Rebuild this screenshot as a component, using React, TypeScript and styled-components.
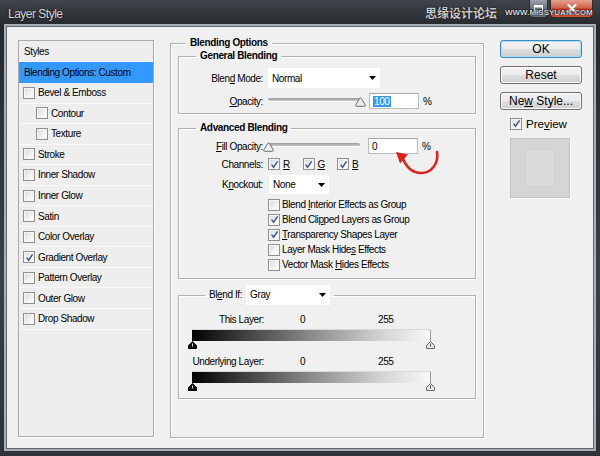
import React from 'react';
import styled, { createGlobalStyle } from 'styled-components';

const Global = createGlobalStyle`
  html, body { margin: 0; padding: 0; background: #2b2f33; }
  body { font-family: 'Liberation Sans', Arial, sans-serif; }
  * { box-sizing: border-box; }
`;

const Window = styled.div`
  position: relative;
  width: 600px;
  height: 456px;
  display: flex;
  flex-direction: column;
  padding: 0 7px 8px;
  overflow: hidden;
  background: linear-gradient(180deg, #3f454b 0%, #262a2e 26px, #3a4047 60%, #2e3338 100%);
`;

const TitleBar = styled.div`
  position: relative;
  height: 27px;
  flex: none;
  display: flex;
  align-items: flex-start;
`;

const TitleText = styled.div`
  padding: 7px 0 0 1px;
  font-size: 12px;
  letter-spacing: -0.5px;
  color: #d6d6d6;
  text-shadow: 0 0 2px #000;
`;

const Caption = styled.div`
  margin-left: auto;
  display: flex;
  gap: 2px;
`;

const CapButton = styled.div<{ $close?: boolean }>`
  width: ${p => (p.$close ? 43 : 19)}px;
  height: 18px;
  border: 1px solid #2a2a2a;
  border-top: none;
  border-radius: 0 0 4px 4px;
  display: flex;
  align-items: center;
  justify-content: center;
  background: ${p =>
    p.$close
      ? 'linear-gradient(180deg, #e7a08f 0%, #d0614a 45%, #b8301a 55%, #d2573b 100%)'
      : 'linear-gradient(180deg, #9aa3ab 0%, #6b747c 50%, #4e565d 55%, #6a737a 100%)'};
`;

const Watermark = styled.div`
  position: absolute;
  left: 418px;
  top: 4px;
  display: flex;
  align-items: center;
  gap: 8px;
  white-space: nowrap;
  pointer-events: none;
`;

const WmCn = styled.span`
  flex: none;
  font-family: 'Noto Sans CJK SC', sans-serif;
  font-size: 12px;
  font-weight: bold;
  color: #c9c9c9;
  text-shadow: 0 0 1px #000, 0 0 1px #000;
`;

const WmEn = styled.span`
  flex: none;
  font-family: 'Liberation Sans', Arial, sans-serif;
  font-size: 8px;
  font-weight: bold;
  color: #d4d4d4;
  text-shadow: 0 0 1px #000, 0 0 1px #000;
`;

const Client = styled.div`
  flex: 1;
  display: flex;
  align-items: flex-start;
  gap: 16px;
  padding: 13px 11px 0;
  background: #f0f0f0;
  box-shadow: 0 0 0 1px #636970, 0 0 0 3px #a6aeb6;
  font-size: 10px;
  letter-spacing: -0.4px;
  color: #000;
`;

/* ---------- left list ---------- */

const StylesList = styled.div`
  width: 136px;
  height: 397px;
  flex: none;
  border: 1px solid #a9a9a9;
  box-shadow: 1px 1px 0 #fff;
  background: #eeeeee;
  display: flex;
  flex-direction: column;
`;

const StyleRow = styled.div<{ $selected?: boolean; $indent?: boolean; $header?: boolean }>`
  height: ${p => (p.$header || p.$selected ? 21 : 20.55)}px;
  flex: none;
  display: flex;
  align-items: center;
  gap: 3px;
  padding-left: ${p => (p.$header || p.$selected ? 5 : p.$indent ? 17 : 4)}px;
  background: ${p => (p.$selected ? '#3399ff' : 'transparent')};
  border-bottom: 1px solid ${p => (p.$selected ? '#3399ff' : '#f9f9f9')};
  white-space: nowrap;
`;

/* ---------- checkbox ---------- */

const Box = styled.span`
  flex: none;
  width: 12px;
  height: 12px;
  border: 1px solid #8f8f8f;
  background: linear-gradient(135deg, #d6d8db 0%, #f3f3f3 60%, #ffffff 100%);
  box-shadow: inset 0 0 0 1px #f6f6f6;
  display: flex;
  align-items: center;
  justify-content: center;
`;

const Check = ({ checked }: { checked?: boolean }) => (
  <Box>
    {checked && (
      <svg width="9" height="9" viewBox="0 0 9 9">
        <path d="M1.6 4.6 L3.6 7.2 L7.6 1.4" fill="none" stroke="#3b5596" strokeWidth="1.5" />
      </svg>
    )}
  </Box>
);

/* ---------- group boxes ---------- */

const Group = styled.fieldset<{ $w: number; $h?: number; $mt?: number }>`
  position: relative;
  margin: ${p => p.$mt ?? 0}px 0 0;
  padding: 0;
  width: ${p => p.$w}px;
  ${p => (p.$h ? `height: ${p.$h}px;` : '')}
  min-width: 0;
  border: 1px solid #b0b0b0;
  box-shadow: 1px 1px 0 #fff, inset 1px 1px 0 #fff;
`;

const Legend = styled.legend<{ $offset: number; $plain?: boolean }>`
  margin-left: ${p => p.$offset}px;
  padding: 0 4px;
  font-weight: ${p => (p.$plain ? 'normal' : 'bold')};
  letter-spacing: ${p => (p.$plain ? '-0.4px' : '-0.35px')};
  line-height: 12px;
  display: flex;
  align-items: center;
  gap: 4px;
`;

const GroupBody = styled.div<{ $pad: string }>`
  padding: ${p => p.$pad};
  display: flex;
  flex-direction: column;
`;

const Middle = styled.div`
  margin-top: -3px;
  flex: none;
`;

const FormRow = styled.div<{ $h: number; $mt?: number }>`
  height: ${p => p.$h}px;
  margin-top: ${p => p.$mt ?? 0}px;
  display: flex;
  align-items: center;
  flex: none;
`;

const Label = styled.span<{ $w?: number; $gap?: number }>`
  width: ${p => p.$w ?? 84}px;
  margin-right: ${p => p.$gap ?? 5}px;
  text-align: right;
  flex: none;
  white-space: nowrap;
`;

const U = styled.u`
  text-decoration: underline;
  text-underline-offset: 1px;
`;

const SelectBox = styled.div<{ $w: number; $h: number }>`
  width: ${p => p.$w}px;
  height: ${p => p.$h}px;
  flex: none;
  background: #fff;
  display: flex;
  align-items: center;
  justify-content: space-between;
  padding: 0 4px 0 4px;
  font-weight: normal;
`;

const Arrow = () => (
  <svg width="7" height="4" viewBox="0 0 7 4">
    <path d="M0 0 H7 L3.5 4 Z" fill="#000" />
  </svg>
);

const Select = ({ w, h, value }: { w: number; h: number; value: string }) => (
  <SelectBox $w={w} $h={h}>
    <span>{value}</span>
    <Arrow />
  </SelectBox>
);

const SliderWrap = styled.div`
  position: relative;
  width: 102px;
  height: 16px;
  flex: none;
  padding: 5px 6px 0 3px;
`;

const Track = styled.div`
  height: 3px;
  border-radius: 2px;
  background: linear-gradient(180deg, #9a9a9a, #c8c8c8);
  box-shadow: 0 1px 0 #fff;
`;

const ThumbHolder = styled.div`
  position: absolute;
  top: 4px;
`;

const Slider = ({ pos }: { pos: number }) => (
  <SliderWrap>
    <Track />
    <ThumbHolder style={{ left: `${3 + pos * 91 - 4}px` }}>
      <svg width="11" height="10" viewBox="0 0 11 10">
        <path d="M5.5 1 Q6 1 6.6 1.8 L10.3 8 Q10.5 9.3 9.5 9.3 L1.5 9.3 Q0.5 9.3 0.7 8 L4.4 1.8 Q5 1 5.5 1 Z" fill="#ececec" stroke="#6f6f6f" strokeWidth="1" />
      </svg>
    </ThumbHolder>
  </SliderWrap>
);

const NumInput = styled.div<{ $h: number }>`
  width: 50px;
  height: ${p => p.$h}px;
  margin-left: 2px;
  flex: none;
  background: #fff;
  border: 1px solid #b9bdc4;
  border-top-color: #a4a8ae;
  display: flex;
  align-items: center;
  padding-left: 3px;
`;

const Selected = styled.span`
  background: #3399ff;
  color: #fff;
  padding: 0 1px;
`;

const Pct = styled.span`
  margin-left: 4px;
`;

const ChannelItem = styled.div`
  width: 34.5px;
  flex: none;
  display: flex;
  align-items: center;
  gap: 3px;
`;

const CheckLine = styled.div`
  height: 15px;
  display: flex;
  align-items: center;
  gap: 2px;
  padding-left: 89px;
  white-space: nowrap;
`;

const ValueCell = styled.span<{ $w: number; $ml?: number }>`
  width: ${p => p.$w}px;
  margin-left: ${p => p.$ml ?? 0}px;
  flex: none;
`;

const GradBar = styled.div`
  width: 239px;
  height: 11px;
  margin: 5px 0 0 2px;
  flex: none;
  background: linear-gradient(90deg, #000 0%, #3a3a3a 20%, #8a8a8a 50%, #d4d4d4 80%, #f8f8f8 100%);
  border-right: 1px solid #9a9a9a;
  box-shadow: 0 -1px 0 #d8d8d8;
`;

const ThumbRow = styled.div`
  height: 8px;
  width: 247px;
  margin-left: -2px;
  display: flex;
  justify-content: space-between;
  flex: none;
`;

const BlendThumb = ({ dark }: { dark?: boolean }) => (
  <svg width="9" height="8" viewBox="0 0 9 8">
    <path
      d="M4.5 0.5 L8.5 4.5 L8.5 7.5 L0.5 7.5 L0.5 4.5 Z"
      fill={dark ? '#111' : '#e4e4e4'}
      stroke={dark ? '#000' : '#6a6a6a'}
      strokeWidth="1"
    />
    <line x1="4.5" y1="2.5" x2="4.5" y2="5.5" stroke={dark ? '#d8d8d8' : '#555'} strokeWidth="1" />
  </svg>
);

const RedArrow = styled.svg`
  position: absolute;
  left: 215px;
  top: 8px;
  overflow: visible;
`;

/* ---------- right column ---------- */

const RightCol = styled.div`
  width: 82px;
  flex: none;
  display: flex;
  flex-direction: column;
  letter-spacing: 0;
`;

const Button = styled.div<{ $default?: boolean; $mt?: number }>`
  height: 18px;
  margin-top: ${p => p.$mt ?? 0}px;
  border: 1px solid ${p => (p.$default ? '#3c8bc4' : '#707070')};
  border-radius: 3px;
  background: linear-gradient(180deg, #f3f3f3 0%, #ebebeb 48%, #dddddd 52%, #cfcfcf 100%);
  box-shadow: ${p => (p.$default ? 'inset 0 0 0 1px #a9dcf6' : 'inset 0 0 0 1px #fcfcfc')};
  display: flex;
  align-items: center;
  justify-content: center;
  font-size: 12px;
  color: #000;
`;

const PreviewRow = styled.div`
  margin-top: 7px;
  padding-left: 10px;
  height: 13px;
  display: flex;
  align-items: center;
  gap: 4px;
  font-size: 11.5px;
`;

const Swatch = styled.div`
  margin: 8px 0 0 10px;
  width: 60px;
  height: 60px;
  background: #d5d5d5;
  border: 1px solid #c3c3c3;
  box-shadow: 1px 1px 0 #fafafa;
  display: flex;
  align-items: center;
  justify-content: center;
`;

const SwatchInner = styled.div`
  width: 26px;
  height: 34px;
  background: #d9d9d9;
  border: 1px solid #dcdcdc;
`;

const styleItems: { label: string; checked?: boolean; indent?: boolean }[] = [
  { label: 'Bevel & Emboss' },
  { label: 'Contour', indent: true },
  { label: 'Texture', indent: true },
  { label: 'Stroke' },
  { label: 'Inner Shadow' },
  { label: 'Inner Glow' },
  { label: 'Satin' },
  { label: 'Color Overlay' },
  { label: 'Gradient Overlay', checked: true },
  { label: 'Pattern Overlay' },
  { label: 'Outer Glow' },
  { label: 'Drop Shadow' },
];

export default function App() {
  return (
    <>
      <Global />
      <Window>
        <TitleBar>
          <TitleText>Layer Style</TitleText>
          <Caption>
            <CapButton>
              <svg width="9" height="8" viewBox="0 0 9 8">
                <rect x="0.5" y="0.5" width="8" height="7" fill="none" stroke="#fff" />
                <rect x="0.5" y="0.5" width="8" height="2" fill="#fff" />
              </svg>
            </CapButton>
            <CapButton $close>
              <svg width="10" height="9" viewBox="0 0 10 9">
                <path d="M1.5 1 L8.5 8 M8.5 1 L1.5 8" stroke="#fff" strokeWidth="2.2" strokeLinecap="round" />
              </svg>
            </CapButton>
          </Caption>
          <Watermark>
            <WmCn>思缘设计论坛</WmCn>
            <WmEn>WWW.MISSYUAN.COM</WmEn>
          </Watermark>
        </TitleBar>

        <Client>
          <StylesList>
            <StyleRow $header>Styles</StyleRow>
            <StyleRow $selected>Blending Options: Custom</StyleRow>
            {styleItems.map(it => (
              <StyleRow key={it.label} $indent={it.indent}>
                <Check checked={it.checked} />
                <span>{it.label}</span>
              </StyleRow>
            ))}
          </StylesList>

          <Middle>
            <Group $w={314} $h={401}>
              <Legend $offset={15}>Blending Options</Legend>
              <GroupBody $pad="1px 7px 0">
                <Group $w={298}>
                  <Legend $offset={17}>General Blending</Legend>
                  <GroupBody $pad="6px 0 4px">
                    <FormRow $h={20}>
                      <Label>
                        Blen<U>d</U> Mode:
                      </Label>
                      <Select w={112} h={20} value="Normal" />
                    </FormRow>
                    <FormRow $h={16} $mt={5}>
                      <Label $gap={2}>
                        <U>O</U>pacity:
                      </Label>
                      <Slider pos={1} />
                      <NumInput $h={16}>
                        <Selected>100</Selected>
                      </NumInput>
                      <Pct>%</Pct>
                    </FormRow>
                  </GroupBody>
                </Group>

                <Group $w={298} $mt={8}>
                  <Legend $offset={17}>Advanced Blending</Legend>
                  <GroupBody $pad="4px 0 6px">
                    <FormRow $h={16}>
                      <Label $gap={1}>
                        <U>F</U>ill Opacity:
                      </Label>
                      <Slider pos={0} />
                      <NumInput $h={16}>0</NumInput>
                      <Pct>%</Pct>
                    </FormRow>
                    <FormRow $h={14} $mt={3}>
                      <Label>Channels:</Label>
                      <ChannelItem>
                        <Check checked />
                        <U>R</U>
                      </ChannelItem>
                      <ChannelItem>
                        <Check checked />
                        <U>G</U>
                      </ChannelItem>
                      <ChannelItem>
                        <Check checked />
                        <U>B</U>
                      </ChannelItem>
                    </FormRow>
                    <FormRow $h={19} $mt={4}>
                      <Label $gap={6}>
                        K<U>n</U>ockout:
                      </Label>
                      <Select w={60} h={19} value="None" />
                    </FormRow>
                    <FormRow $h={3} />
                    <CheckLine>
                      <Check />
                      <span>
                        Blend <U>I</U>nterior Effects as Group
                      </span>
                    </CheckLine>
                    <CheckLine>
                      <Check checked />
                      <span>
                        Blend Cli<U>p</U>ped Layers as Group
                      </span>
                    </CheckLine>
                    <CheckLine>
                      <Check checked />
                      <span>
                        <U>T</U>ransparency Shapes Layer
                      </span>
                    </CheckLine>
                    <CheckLine>
                      <Check />
                      <span>
                        Layer Mask Hide<U>s</U> Effects
                      </span>
                    </CheckLine>
                    <CheckLine>
                      <Check />
                      <span>
                        Vector Mask <U>H</U>ides Effects
                      </span>
                    </CheckLine>
                  </GroupBody>
                  <RedArrow width="50" height="40" viewBox="0 0 50 40">
                    <path
                      d="M9 17 C13 26, 19 31, 27 31 C37 31, 45 22, 43 10"
                      fill="none"
                      stroke="#e0201a"
                      strokeWidth="2.6"
                      strokeLinecap="round"
                    />
                    <path d="M2 10 L14 12.5 L6 21.5 Z" fill="#e0201a" />
                  </RedArrow>
                </Group>

                <Group $w={298} $mt={6}>
                  <Legend $offset={26} $plain>
                    <span>
                      Bl<U>e</U>nd If:
                    </span>
                    <Select w={84} h={20} value="Gray" />
                  </Legend>
                  <GroupBody $pad="0 0 7px 11px">
                    <FormRow $h={12} $mt={8}>
                      <Label $w={74} $gap={0}>
                        This Layer:
                      </Label>
                      <ValueCell $w={78} $ml={36}>
                        0
                      </ValueCell>
                      <ValueCell $w={30}>255</ValueCell>
                    </FormRow>
                    <GradBar />
                    <ThumbRow>
                      <BlendThumb dark />
                      <BlendThumb />
                    </ThumbRow>
                    <FormRow $h={12} $mt={6}>
                      <Label $w={74} $gap={0}>
                        Underlying Layer:
                      </Label>
                      <ValueCell $w={78} $ml={36}>
                        0
                      </ValueCell>
                      <ValueCell $w={30}>255</ValueCell>
                    </FormRow>
                    <GradBar />
                    <ThumbRow>
                      <BlendThumb dark />
                      <BlendThumb />
                    </ThumbRow>
                  </GroupBody>
                </Group>
              </GroupBody>
            </Group>
          </Middle>

          <RightCol>
            <Button $default>OK</Button>
            <Button $mt={8}>Reset</Button>
            <Button $mt={8}>
              Ne<U>w</U>&nbsp;Style...
            </Button>
            <PreviewRow>
              <Check checked />
              <span>
                Pre<U>v</U>iew
              </span>
            </PreviewRow>
            <Swatch>
              <SwatchInner />
            </Swatch>
          </RightCol>
        </Client>
      </Window>
    </>
  );
}
